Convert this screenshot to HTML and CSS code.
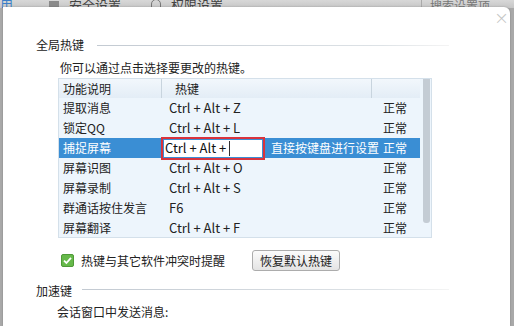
FILE: index.html
```html
<!DOCTYPE html>
<html>
<head>
<meta charset="utf-8">
<link rel="stylesheet" href="styles.css">
</head>
<body>
<div class="topbar">
  <span class="tab tab-first">用</span>
  <span class="tab-ico"></span><span class="tab">安全设置</span>
  <span class="tab-ico ico2"></span><span class="tab">权限设置</span>
  <span class="search">搜索设置项</span>
</div>
<div class="frame">
  <div class="dialog">
    <span class="close">×</span>
    <div class="section"><span class="sec-title">全局热键</span><span class="sec-line"></span></div>
    <div class="desc">你可以通过点击选择要更改的热键。</div>
    <div class="table">
      <div class="rows">
        <div class="row head"><span class="c1">功能说明</span><span class="c2 h2">热键</span><span class="c3"></span></div>
        <div class="row"><span class="c1">提取消息</span><span class="c2">Ctrl + Alt + Z</span><span class="c3">正常</span></div>
        <div class="row"><span class="c1">锁定QQ</span><span class="c2">Ctrl + Alt + L</span><span class="c3">正常</span></div>
        <div class="row sel"><span class="c1">捕捉屏幕</span><span class="c2 editing"><span class="edit"><span class="edit-in"><span class="edit-text">Ctrl + Alt +</span><span class="caret"></span></span></span><span class="hint">直接按键盘进行设置</span></span><span class="c3">正常</span></div>
        <div class="row"><span class="c1">屏幕识图</span><span class="c2">Ctrl + Alt + O</span><span class="c3">正常</span></div>
        <div class="row"><span class="c1">屏幕录制</span><span class="c2">Ctrl + Alt + S</span><span class="c3">正常</span></div>
        <div class="row"><span class="c1">群通话按住发言</span><span class="c2">F6</span><span class="c3">正常</span></div>
        <div class="row"><span class="c1">屏幕翻译</span><span class="c2">Ctrl + Alt + F</span><span class="c3">正常</span></div>
      </div>
      <div class="scroll"><div class="thumb"></div></div>
    </div>
    <div class="checkrow">
      <span class="check"><svg width="13" height="13" viewBox="0 0 13 13"><rect x="0.5" y="0.5" width="12" height="12" rx="1.5" fill="#66b94a" stroke="#4f9a38"/><path d="M3 6.6 L5.4 9 L10 3.8" fill="none" stroke="#fff" stroke-width="1.8"/></svg></span>
      <span class="check-label">热键与其它软件冲突时提醒</span>
      <span class="btn">恢复默认热键</span>
    </div>
    <div class="section sec2"><span class="sec-title">加速键</span><span class="sec-line"></span></div>
    <div class="desc desc2">会话窗口中发送消息:</div>
  </div>
</div>
</body>
</html>
```
FILE: styles.css
```css
html, body {
  margin: 0;
  padding: 0;
}
body {
  width: 514px;
  height: 326px;
  overflow: hidden;
  background: #a9a9a9;
  font-family: "Noto Sans CJK SC", "Noto Sans", sans-serif;
  font-size: 12px;
  color: #222;
  display: flex;
  flex-direction: column;
}
.topbar {
  height: 8px;
  flex: none;
  background: linear-gradient(#d8d8d8, #c6c6c6);
  display: flex;
  align-items: flex-end;
  overflow: hidden;
  color: #444;
}
.tab {
  font-size: 13px;
  line-height: 15px;
  margin-bottom: -4px;
  flex: none;
}
.tab-first {
  color: #3a7fc8;
  margin-right: 36px;
}
.tab-ico {
  width: 10px;
  height: 10px;
  background: #8a8a8a;
  margin-right: 10px;
  margin-bottom: -3px;
  flex: none;
}
.ico2 {
  margin-left: 30px;
  background: none;
  border: 1px solid #777;
  border-radius: 5px 5px 0 0;
  width: 8px;
}
.search {
  margin-left: auto;
  margin-right: 10px;
  font-size: 12px;
  line-height: 15px;
  margin-bottom: -5px;
  padding: 0 14px 0 8px;
  border-left: 1px solid #aaa;
  color: #777;
}
.frame {
  flex: 1;
  display: flex;
  padding: 0 4px 0 3px;
  margin-top: -1px;
}
.dialog {
  flex: 1;
  background: #fff;
  border-radius: 0 6px 0 0;
  position: relative;
  box-shadow: 0 0 2px rgba(0,0,0,0.25);
}
.close {
  position: absolute;
  right: 1px;
  top: 3px;
  font-size: 18px;
  line-height: 16px;
  color: #c4c4c4;
  font-family: "DejaVu Sans", sans-serif;
  font-weight: 300;
}
.section {
  display: flex;
  align-items: center;
  margin: 30px 61px 0 33px;
  height: 16px;
}
.sec-title {
  line-height: 16px;
  flex: none;
}
.sec-line {
  flex: 1;
  height: 1px;
  margin-left: 13px;
  background: linear-gradient(90deg, #c3cad2, #dde2e6 80%, #f4f4f4);
}
.sec2 {
  margin-top: 12px;
}
.sec2 .sec-line {
  margin-left: 10px;
  margin-top: -4px;
}
.desc {
  margin: 7px 0 0 57px;
  line-height: 16px;
}
.desc2 {
  margin: 5px 0 0 54px;
}
.table {
  margin: 2px 0 0 55px;
  width: 374px;
  height: 160px;
  display: flex;
  background: #edf5fc;
  border: 1px solid #d4e0ea;
  box-sizing: border-box;
}
.rows {
  flex: 1;
  display: flex;
  flex-direction: column;
}
.row {
  height: 20px;
  display: flex;
  align-items: center;
  line-height: 16px;
  flex: none;
}
.head {
  height: 19px;
  background: linear-gradient(#f2f7fc, #e3edf6);
}
.c1 {
  width: 102px;
  padding-left: 4px;
  box-sizing: border-box;
  flex: none;
  height: 100%;
  display: flex;
  align-items: center;
}
.c2 {
  width: 210px;
  padding-left: 8px;
  box-sizing: border-box;
  flex: none;
  height: 100%;
  display: flex;
  align-items: center;
  font-size: 13px;
}
.c3 {
  flex: 1;
  padding-left: 12px;
  height: 100%;
  display: flex;
  align-items: center;
}
.head .c2 {
  border-left: 1px solid #c8d4de;
  padding-left: 13px;
  font-size: 12px;
}
.head .c3 {
  border-left: 1px solid #c8d4de;
}
.sel {
  background: #3a8ed4;
  color: #fff;
}
.c2.editing {
  padding-left: 0;
  position: relative;
  overflow: visible;
}
.edit {
  width: 104px;
  height: 23px;
  border: 2px solid #d8333d;
  box-sizing: border-box;
  display: flex;
  padding: 1px;
  flex: none;
}
.edit-in {
  flex: 1;
  background: #fff;
  display: flex;
  align-items: center;
  color: #111;
  padding-left: 1px;
}
.edit-text {
  font-size: 13px;
}
.caret {
  width: 1px;
  height: 15px;
  background: #333;
  margin-left: 3px;
}
.hint {
  margin-left: 6px;
  font-size: 12px;
  white-space: nowrap;
}
.scroll {
  width: 10px;
  flex: none;
  padding-right: 1px;
  display: flex;
  justify-content: flex-end;
}
.thumb {
  width: 7px;
  height: 144px;
  background: #c4ccd4;
  border-radius: 0 0 3px 3px;
}
.checkrow {
  display: flex;
  align-items: center;
  margin: 12px 0 0 58px;
  height: 21px;
}
.check {
  display: flex;
  width: 13px;
  height: 13px;
}
.check-label {
  margin-left: 7px;
  line-height: 16px;
}
.btn {
  margin-left: 27px;
  width: 88px;
  height: 21px;
  box-sizing: border-box;
  border: 1px solid #acacac;
  border-radius: 3px;
  background: linear-gradient(#fbfbfb, #e4e4e4);
  display: flex;
  align-items: center;
  justify-content: center;
  line-height: 16px;
}
```
